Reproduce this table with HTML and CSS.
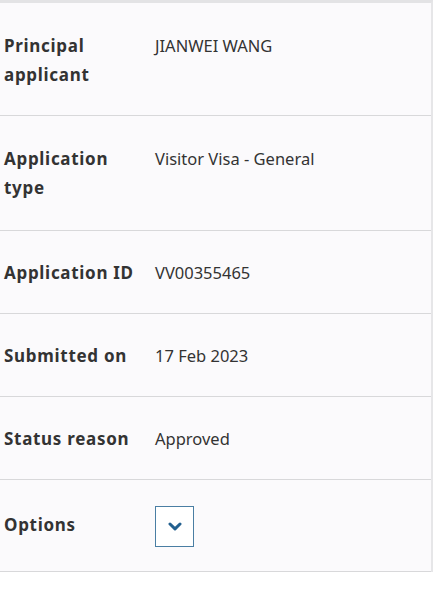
FILE: index.html
```html
<!DOCTYPE html>
<html lang="en">
<head>
<meta charset="utf-8">
<link rel="stylesheet" href="styles.css">
</head>
<body>
<div class="card">
  <div class="row row-first">
    <div class="label">Principal applicant</div>
    <div class="value">JIANWEI WANG</div>
  </div>
  <div class="row row-tall">
    <div class="label">Application type</div>
    <div class="value">Visitor Visa - General</div>
  </div>
  <div class="row">
    <div class="label">Application ID</div>
    <div class="value">VV00355465</div>
  </div>
  <div class="row">
    <div class="label">Submitted on</div>
    <div class="value">17 Feb 2023</div>
  </div>
  <div class="row">
    <div class="label">Status reason</div>
    <div class="value">Approved</div>
  </div>
  <div class="row row-options">
    <div class="label">Options</div>
    <div class="value">
      <button class="toggle" type="button" aria-label="Options">
        <svg width="14" height="9" viewBox="0 0 14 9"><path d="M2 2 L7 6.8 L12 2" fill="none" stroke="#23608f" stroke-width="3" stroke-linecap="round" stroke-linejoin="round"/></svg>
      </button>
    </div>
  </div>
</div>
</body>
</html>
```
FILE: styles.css
```css
html, body {
  margin: 0;
  padding: 0;
  background: #ffffff;
}
body {
  font-family: "Noto Sans", "Open Sans", sans-serif;
  color: #333333;
}
.card {
  width: 431px;
  background: #fbfafc;
  border-top: 3px solid #e3e3e5;
  border-right: 2px solid #e6e6e8;
}
.row {
  display: grid;
  grid-template-columns: 140px 1fr;
  column-gap: 11px;
  align-items: start;
  padding: 27px 0 26px 4px;
  border-bottom: 1px solid #d8d8da;
}
.row-first {
  padding-top: 28px;
}
.row-tall {
  padding-top: 28px;
  padding-bottom: 28px;
}
.label {
  font-weight: 700;
  font-size: 17px;
  line-height: 29px;
  letter-spacing: 0.7px;
  color: #333333;
}
.value {
  font-size: 16.5px;
  line-height: 29px;
  color: #333333;
}
.row-options {
  padding-top: 26px;
  padding-bottom: 24px;
}
.row-options .label {
  margin-top: 4px;
}
.toggle {
  display: flex;
  align-items: center;
  justify-content: center;
  width: 39px;
  height: 41px;
  margin: 0;
  padding: 0;
  background: #ffffff;
  border: 1.5px solid #4a7ea3;
  border-radius: 0;
}
```
